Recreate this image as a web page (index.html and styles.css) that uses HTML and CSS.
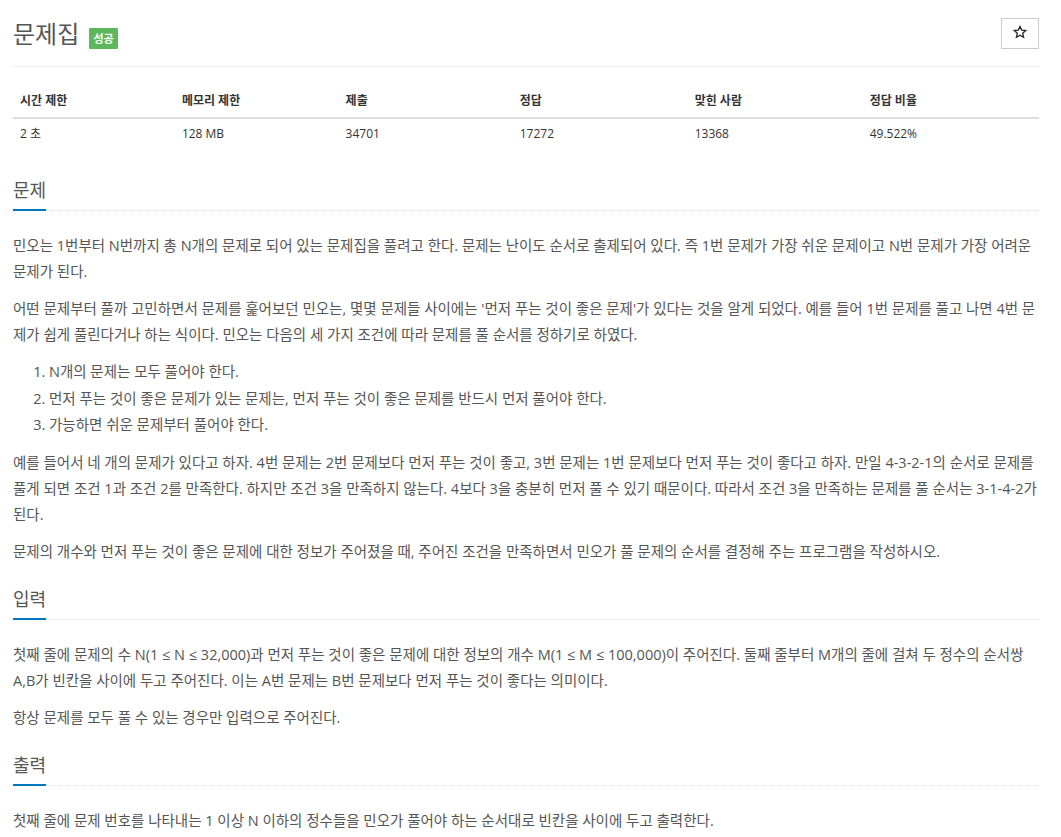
FILE: index.html
```html
<!DOCTYPE html>
<html lang="ko">
<head>
<meta charset="utf-8">
<title>문제집</title>
<link rel="stylesheet" href="styles.css">
</head>
<body>
<div class="page">
  <div class="page-header">
    <h1 class="title">문제집 <span class="badge">성공</span></h1>
    <button class="star-btn" type="button" aria-label="즐겨찾기">
      <svg width="14" height="14" viewBox="0 0 24 24"><path d="M12 2.5l2.9 6.3 6.9.7-5.2 4.6 1.5 6.8L12 17.4l-6.1 3.5 1.5-6.8-5.2-4.6 6.9-.7z" fill="none" stroke="#222" stroke-width="2.2" stroke-linejoin="miter"/></svg>
    </button>
  </div>
  <hr class="rule">

  <table class="info">
    <thead>
      <tr>
        <th class="c1">시간 제한</th>
        <th class="c2">메모리 제한</th>
        <th class="c3">제출</th>
        <th class="c4">정답</th>
        <th class="c5">맞힌 사람</th>
        <th class="c6">정답 비율</th>
      </tr>
    </thead>
    <tbody>
      <tr>
        <td>2 초</td>
        <td>128 MB</td>
        <td>34701</td>
        <td>17272</td>
        <td>13368</td>
        <td>49.522%</td>
      </tr>
    </tbody>
  </table>

  <section class="section first">
    <div class="headline"><h2>문제</h2></div>
    <div class="text">
      <p>민오는 1번부터 N번까지 총 N개의 문제로 되어 있는 문제집을 풀려고 한다. 문제는 난이도 순서로 출제되어 있다. 즉 1번 문제가 가장 쉬운 문제이고 N번 문제가 가장 어려운 문제가 된다.</p>
      <p>어떤 문제부터 풀까 고민하면서 문제를 훑어보던 민오는, 몇몇 문제들 사이에는 '먼저 푸는 것이 좋은 문제'가 있다는 것을 알게 되었다. 예를 들어 1번 문제를 풀고 나면 4번 문제가 쉽게 풀린다거나 하는 식이다. 민오는 다음의 세 가지 조건에 따라 문제를 풀 순서를 정하기로 하였다.</p>
      <ol>
        <li>N개의 문제는 모두 풀어야 한다.</li>
        <li>먼저 푸는 것이 좋은 문제가 있는 문제는, 먼저 푸는 것이 좋은 문제를 반드시 먼저 풀어야 한다.</li>
        <li>가능하면 쉬운 문제부터 풀어야 한다.</li>
      </ol>
      <p>예를 들어서 네 개의 문제가 있다고 하자. 4번 문제는 2번 문제보다 먼저 푸는 것이 좋고, 3번 문제는 1번 문제보다 먼저 푸는 것이 좋다고 하자. 만일 4-3-2-1의 순서로 문제를 풀게 되면 조건 1과 조건 2를 만족한다. 하지만 조건 3을 만족하지 않는다. 4보다 3을 충분히 먼저 풀 수 있기 때문이다. 따라서 조건 3을 만족하는 문제를 풀 순서는 3-1-4-2가 된다.</p>
      <p>문제의 개수와 먼저 푸는 것이 좋은 문제에 대한 정보가 주어졌을 때, 주어진 조건을 만족하면서 민오가 풀 문제의 순서를 결정해 주는 프로그램을 작성하시오.</p>
    </div>
  </section>

  <section class="section">
    <div class="headline"><h2>입력</h2></div>
    <div class="text">
      <p>첫째 줄에 문제의 수 N(1 ≤ N ≤ 32,000)과 먼저 푸는 것이 좋은 문제에 대한 정보의 개수 M(1 ≤ M ≤ 100,000)이 주어진다. 둘째 줄부터 M개의 줄에 걸쳐 두 정수의 순서쌍 A,B가 빈칸을 사이에 두고 주어진다. 이는 A번 문제는 B번 문제보다 먼저 푸는 것이 좋다는 의미이다.</p>
      <p>항상 문제를 모두 풀 수 있는 경우만 입력으로 주어진다.</p>
    </div>
  </section>

  <section class="section">
    <div class="headline"><h2>출력</h2></div>
    <div class="text">
      <p>첫째 줄에 문제 번호를 나타내는 1 이상 N 이하의 정수들을 민오가 풀어야 하는 순서대로 빈칸을 사이에 두고 출력한다.</p>
    </div>
  </section>
</div>
</body>
</html>
```

FILE: styles.css
```css
html, body {
  margin: 0;
  padding: 0;
  background: #fff;
}

body {
  font-family: "Open Sans", "Noto Sans CJK KR", sans-serif;
  color: #333;
  font-size: 14px;
}

.page {
  width: 1026px;
  margin-left: 13px;
}

.page-header {
  display: flex;
  justify-content: space-between;
  align-items: center;
  padding-top: 18px;
  height: 31px;
}

.title {
  margin: 0;
  font-size: 24px;
  font-weight: 400;
  line-height: 31px;
  color: #555;
}

.badge {
  display: inline-block;
  background: #5cb85c;
  color: #fff;
  font-size: 11px;
  font-weight: 700;
  line-height: 13px;
  padding: 4px 4px;
  border-radius: 1px;
  margin-left: 4px;
  vertical-align: baseline;
}

.star-btn {
  width: 38px;
  height: 31px;
  padding: 0;
  margin: 0;
  background: #fff;
  border: 1px solid #ccc;
  border-radius: 0;
  display: flex;
  align-items: center;
  justify-content: center;
}

.star-btn svg {
  display: block;
  margin-top: -3px;
}

.rule {
  margin: 17px 0 0;
  border: 0;
  border-top: 1px solid #eee;
  height: 0;
}

.info {
  margin-top: 18px;
  width: 100%;
  border-collapse: collapse;
  font-size: 12px;
  color: #333;
}

.info th {
  text-align: left;
  font-weight: 700;
  padding: 8px 7px;
  line-height: 16px;
  border-bottom: 2px solid #ddd;
}

.info td {
  text-align: left;
  padding: 7px 7px;
  line-height: 16px;
}

.c1 { width: 163px; }
.c2 { width: 164px; }
.c3 { width: 174px; }
.c4 { width: 175px; }
.c5 { width: 175px; }
.c6 { width: 175px; }

.section {
  margin-top: 24px;
}

.section.first {
  margin-top: 31px;
}

.headline {
  border-bottom: 1px dotted #ddd;
}

.headline h2 {
  display: inline-block;
  margin: 0 0 -1px;
  font-size: 18px;
  font-weight: 400;
  line-height: 20px;
  color: #555;
  padding-bottom: 9px;
  border-bottom: 2px solid #0076c0;
}

.text {
  padding-top: 22px;
  font-size: 14.5px;
  line-height: 26px;
  color: #555;
}

.text p {
  margin: 0 0 11px;
}

.text ol {
  margin: 0 0 11px;
  padding-left: 36px;
}

.text ol li {
  line-height: 26.5px;
}
```
